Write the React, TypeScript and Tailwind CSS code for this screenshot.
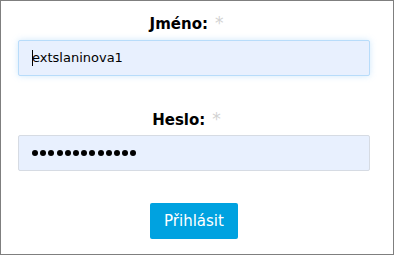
import type { ReactNode } from 'react'

function Field({ label, children, focused, gap }: { label: string; children: ReactNode; focused?: boolean; gap: string }) {
  return (
    <div className="flex flex-col">
      <div className="flex h-[18px] items-center justify-center gap-[7px] pr-[15px] leading-[18px]">
        <span className="text-[15px] font-bold text-black">{label}</span>
        <span className="mt-[-2px] text-[17px] text-[#d2d2d2]">*</span>
      </div>
      <div
        className={
          (focused
            ? 'flex h-[36px] items-center rounded-[2px] border border-[#b8dcfa] bg-[#e8f0fe] px-[13px] text-[13px] text-black shadow-[0_0_6px_rgba(120,190,245,0.35)] '
            : 'flex h-[36px] items-center rounded-[2px] border border-[#d6dbe3] bg-[#e8f0fe] px-[13px] text-[13px] text-black ') + gap
        }
      >
        {children}
      </div>
    </div>
  )
}

export default function App() {
  return (
    <div
      className="flex h-[255px] w-[394px] flex-col border border-[#7f7f7f] bg-white pl-[17px] pr-[23px] pt-[14px]"
      style={{ fontFamily: '"DejaVu Sans", Verdana, sans-serif' }}
    >
      <Field label="Jméno:" focused gap="mt-[7px]">
        <span className="mr-[-1px] inline-block h-[16px] w-px bg-black" />
        <span>extslaninova1</span>
      </Field>

      <div className="mt-[35px]">
        <Field label="Heslo:" gap="mt-[6px]">
          <span className="flex gap-[2.2px]">
            {Array.from({ length: 13 }).map((_, i) => (
              <span key={i} className="inline-block h-[6px] w-[6px] rounded-full bg-black" />
            ))}
          </span>
        </Field>
      </div>

      <div className="mt-[32px] flex justify-center">
        <button
          type="button"
          className="flex h-[36px] w-[88px] items-center justify-center rounded-[2px] bg-[#00a2e0] text-[15px] text-white"
        >
          Přihlásit
        </button>
      </div>
    </div>
  )
}
